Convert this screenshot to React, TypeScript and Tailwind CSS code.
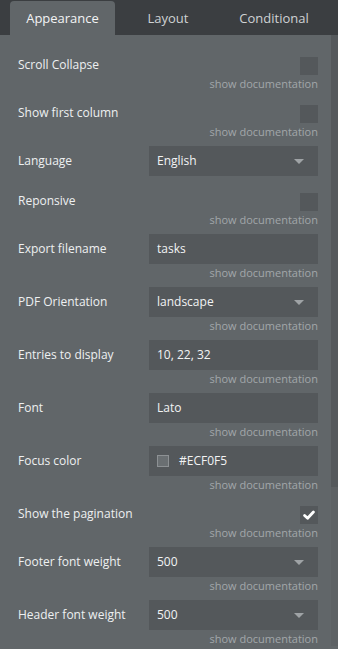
import React from "react";

type Field =
  | { kind: "check"; label: string; checked?: boolean; doc?: boolean }
  | { kind: "select"; label: string; value: string; doc?: boolean }
  | { kind: "input"; label: string; value: string; doc?: boolean; swatch?: boolean };

const fields: Field[] = [
  { kind: "check", label: "Scroll Collapse", doc: true },
  { kind: "check", label: "Show first column", doc: true },
  { kind: "select", label: "Language", value: "English" },
  { kind: "check", label: "Reponsive", doc: true },
  { kind: "input", label: "Export filename", value: "tasks", doc: true },
  { kind: "select", label: "PDF Orientation", value: "landscape", doc: true },
  { kind: "input", label: "Entries to display", value: "10, 22, 32", doc: true },
  { kind: "input", label: "Font", value: "Lato", doc: true },
  { kind: "input", label: "Focus color", value: "#ECF0F5", doc: true, swatch: true },
  { kind: "check", label: "Show the pagination", checked: true, doc: true },
  { kind: "select", label: "Footer font weight", value: "500", doc: true },
  { kind: "select", label: "Header font weight", value: "500", doc: true },
];

function Doc() {
  return (
    <div className="mt-[2px] h-[14px] text-right text-[11px] leading-[14px] text-[#a2a6a9]">
      show documentation
    </div>
  );
}

function Row({ f }: { f: Field }) {
  if (f.kind === "check") {
    return (
      <div className="pt-[14px]">
        <div className="flex h-[18px] items-center justify-between">
          <span className="-mt-[3px] text-[12px] text-[#eef0f1]">{f.label}</span>
          <div className="flex h-[18px] w-[18px] items-center justify-center bg-[#54585b]">
            {f.checked && (
              <svg width="12" height="10" viewBox="0 0 12 10">
                <path d="M1.6 5.4 L4.6 8.2 L10.4 2" fill="none" stroke="#ffffff" strokeWidth="2.8" strokeLinecap="round" strokeLinejoin="round" />
              </svg>
            )}
          </div>
        </div>
        {f.doc && <Doc />}
      </div>
    );
  }
  return (
    <div className={f.kind === "select" && !f.doc ? "pt-[7px] pb-[3px]" : "pt-[7px]"}>
      <div className="flex h-[30px] items-center">
        <span className="w-[131px] shrink-0 text-[12px] text-[#eef0f1]">{f.label}</span>
        <div className="flex h-[30px] flex-1 items-center bg-[#54585b] pl-[8px] pr-[14px] text-[12px] text-[#f2f3f4]">
          {f.kind === "input" && f.swatch && (
            <div className="mr-[10px] h-[12px] w-[12px] border border-[#8d9194] bg-[#6a6f72]" />
          )}
          <span className="flex-1">{f.value}</span>
          {f.kind === "select" && (
            <svg width="10" height="5" viewBox="0 0 10 5">
              <path d="M0 0 L10 0 L5 5 Z" fill="#9fa3a6" />
            </svg>
          )}
        </div>
      </div>
      {f.doc && <Doc />}
    </div>
  );
}

export default function App() {
  return (
    <div className="h-[649px] w-[338px] overflow-hidden bg-[#616669]" style={{ fontFamily: '"Open Sans", sans-serif' }}>
      <div className="flex h-[35px] items-end bg-[#3b3e41] pl-[10px]">
        <div className="flex h-[34px] w-[105px] items-center justify-center rounded-t-[4px] bg-[#616669] pt-[2px] text-[13px] text-[#f3f4f5]">
          Appearance
        </div>
        <div className="flex h-[34px] w-[106px] items-center justify-center pt-[2px] text-[13px] text-[#cfd2d4]">Layout</div>
        <div className="flex h-[34px] w-[106px] items-center justify-center pt-[2px] text-[13px] text-[#cfd2d4]">Conditional</div>
      </div>
      <div className="flex">
        <div className="flex-1 pl-[18px] pr-[13px] pt-[8px]">
          {fields.map((f) => (
            <Row key={f.label} f={f} />
          ))}
        </div>
        <div className="w-[7px] bg-[#5d6164]">
          <div className="h-[452px] bg-[#55595c]" />
        </div>
      </div>
    </div>
  );
}
